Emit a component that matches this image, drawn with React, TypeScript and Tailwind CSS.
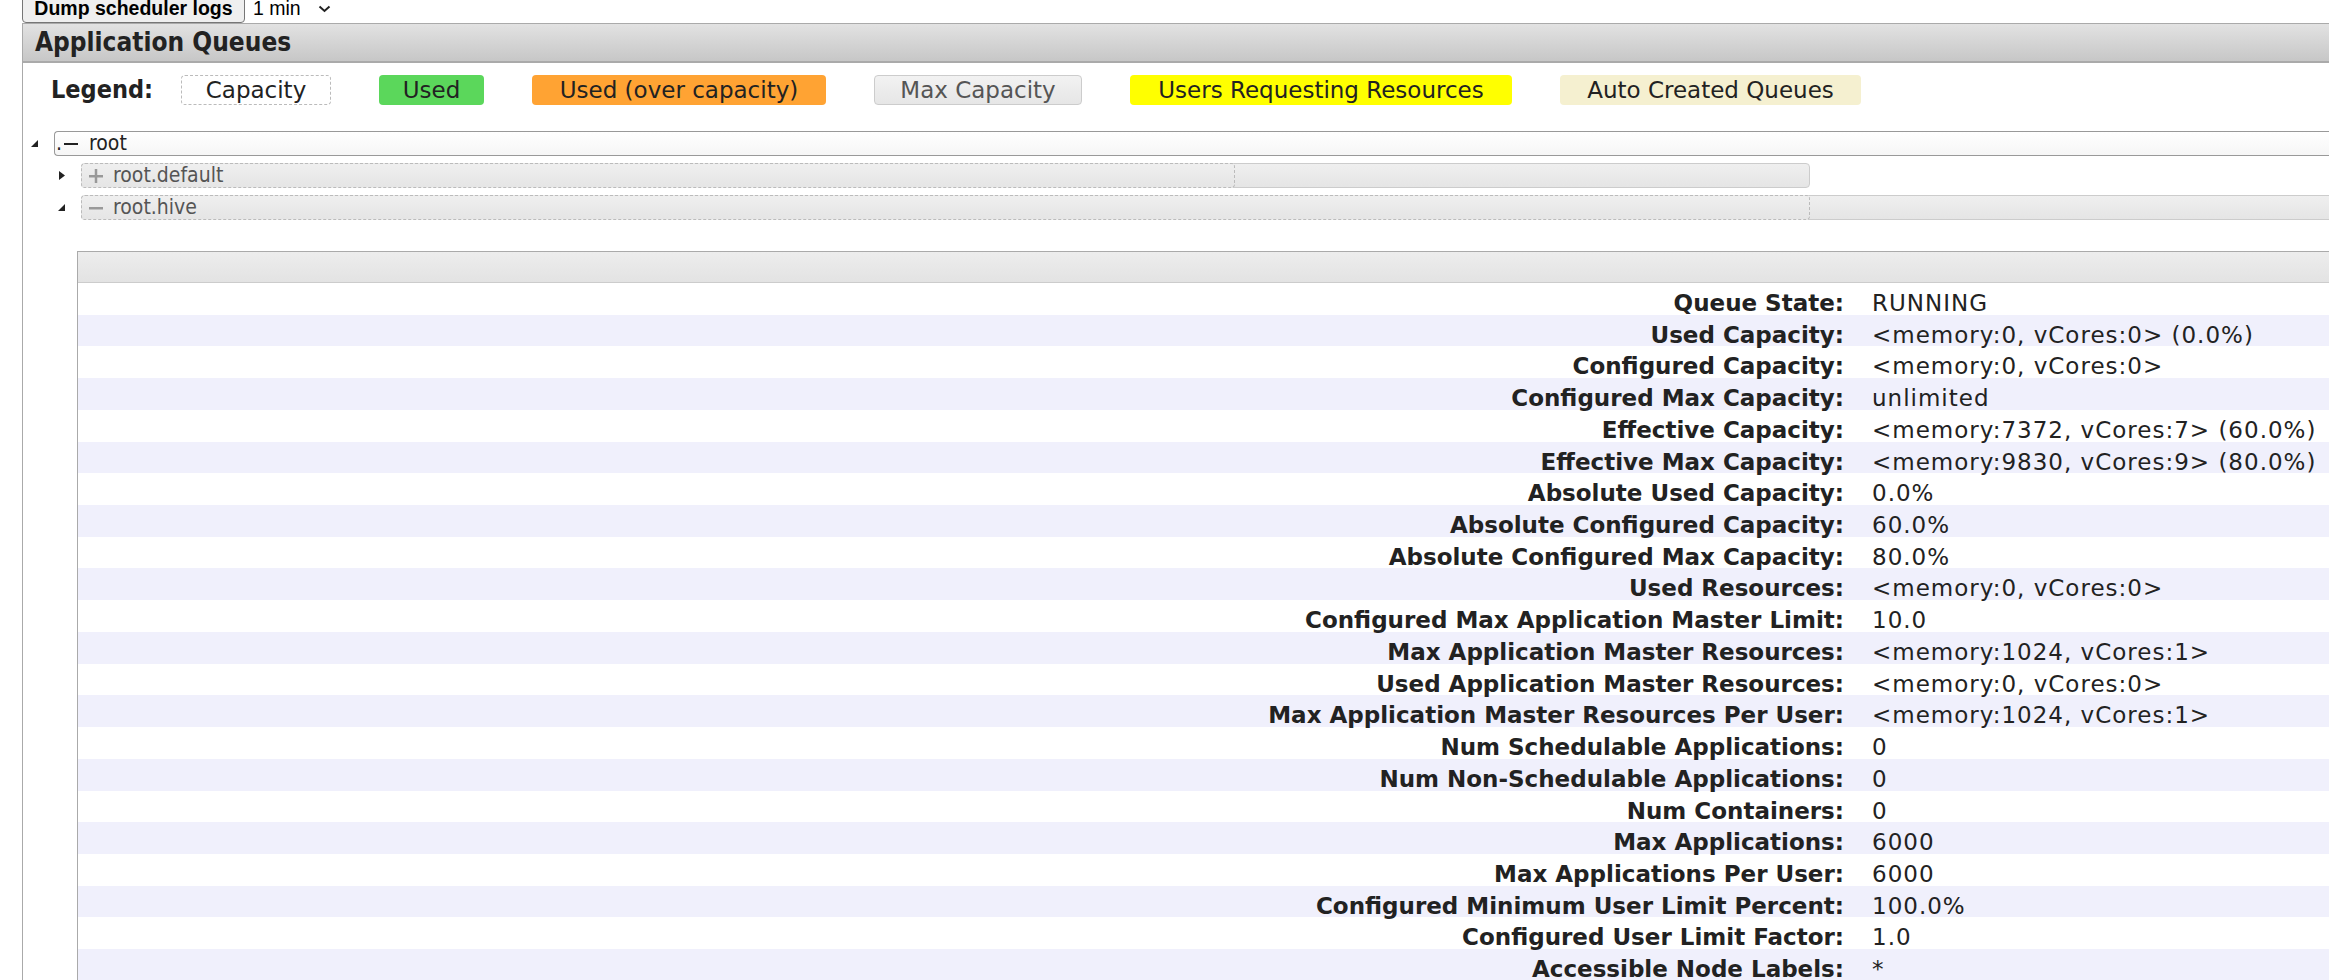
import React from "react";

const rows: [string, string][] = [
  ["Queue State:", "RUNNING"],
  ["Used Capacity:", "<memory:0, vCores:0> (0.0%)"],
  ["Configured Capacity:", "<memory:0, vCores:0>"],
  ["Configured Max Capacity:", "unlimited"],
  ["Effective Capacity:", "<memory:7372, vCores:7> (60.0%)"],
  ["Effective Max Capacity:", "<memory:9830, vCores:9> (80.0%)"],
  ["Absolute Used Capacity:", "0.0%"],
  ["Absolute Configured Capacity:", "60.0%"],
  ["Absolute Configured Max Capacity:", "80.0%"],
  ["Used Resources:", "<memory:0, vCores:0>"],
  ["Configured Max Application Master Limit:", "10.0"],
  ["Max Application Master Resources:", "<memory:1024, vCores:1>"],
  ["Used Application Master Resources:", "<memory:0, vCores:0>"],
  ["Max Application Master Resources Per User:", "<memory:1024, vCores:1>"],
  ["Num Schedulable Applications:", "0"],
  ["Num Non-Schedulable Applications:", "0"],
  ["Num Containers:", "0"],
  ["Max Applications:", "6000"],
  ["Max Applications Per User:", "6000"],
  ["Configured Minimum User Limit Percent:", "100.0%"],
  ["Configured User Limit Factor:", "1.0"],
  ["Accessible Node Labels:", "*"],
];

function OpenArrow() {
  return (
    <svg width="7" height="7" viewBox="0 0 7 7">
      <polygon points="7,0 7,7 0,7" fill="#222" />
    </svg>
  );
}

function ClosedArrow() {
  return (
    <svg width="6" height="9" viewBox="0 0 6 9">
      <polygon points="0,0 6,4.5 0,9" fill="#222" />
    </svg>
  );
}

// plus / minus toggle drawn as bars, like the jstree theme
function Toggle(props: { open: boolean }) {
  return (
    <svg width="14" height="14" viewBox="0 0 14 14">
      <rect x="0" y="6" width="14" height="2.5" fill="#999" />
      {!props.open && <rect x="5.75" y="0" width="2.5" height="14" fill="#999" />}
    </svg>
  );
}

function Legend() {
  return (
    <div className="flex items-center h-[30px] pl-[28px] text-[23px] font-['DejaVu_Sans',sans-serif] text-[#222]">
      <span className="w-[130px] text-[25px] font-bold font-['DejaVu_Sans_Condensed','DejaVu_Sans',sans-serif]">
        Legend:
      </span>
      <div className="flex gap-[48px]">
        <div className="w-[150px] h-[30px] flex items-center justify-center border border-dashed border-[#bbb] rounded-[4px] bg-white">
          Capacity
        </div>
        <div className="w-[105px] h-[30px] flex items-center justify-center rounded-[4px] bg-[#5bd75b]">
          Used
        </div>
        <div className="w-[294px] h-[30px] flex items-center justify-center rounded-[4px] bg-[#ffa333]">
          Used (over capacity)
        </div>
        <div className="w-[208px] h-[30px] flex items-center justify-center rounded-[4px] border border-[#ccc] bg-linear-to-b from-[#f2f2f2] to-[#e6e6e6] text-[#555]">
          Max Capacity
        </div>
        <div className="w-[382px] h-[30px] flex items-center justify-center rounded-[4px] bg-[#ffff00]">
          Users Requesting Resources
        </div>
        <div className="w-[301px] h-[30px] flex items-center justify-center rounded-[4px] bg-[#f5f0d0]">
          Auto Created Queues
        </div>
      </div>
    </div>
  );
}

function ChildQueue(props: { name: string; open: boolean; cap: number; max: number }) {
  return (
    <div className="flex items-center h-[25px]">
      <div className="w-[58px] flex justify-end pr-[16px]">
        {props.open ? <OpenArrow /> : <ClosedArrow />}
      </div>
      <div
        className="relative h-[25px] rounded-[4px] border border-[#ccc] bg-linear-to-b from-[#efefef] to-[#e5e5e5]"
        style={{ width: props.max }}
      >
        <div
          className="absolute left-[-1px] top-[-1px] h-[25px] rounded-[4px] border border-dashed border-[#bbb] bg-linear-to-b from-[#efefef] to-[#e5e5e5] flex items-center pl-[7px] font-['DejaVu_Sans_Condensed','DejaVu_Sans',sans-serif] text-[21px]"
          style={{ width: props.cap }}
        >
          <Toggle open={props.open} />
          <span className="ml-[10px] text-[#555]">{props.name}</span>
        </div>
      </div>
    </div>
  );
}

export default function App() {
  return (
    <div className="w-screen h-[980px] overflow-hidden bg-white">
      <div className="h-[23px] overflow-hidden flex items-end pl-[22px] font-['Liberation_Sans',Arial,sans-serif] text-[19.5px] leading-[19px] text-black">
        <button className="h-[34px] w-[223px] border border-[#767676] rounded-[4px] bg-[#efefef] font-bold flex items-end justify-center pb-[4px]">
          Dump scheduler logs
        </button>
        <div className="flex items-end h-[23px] ml-[8px] pb-[5px]">
          <span>1 min</span>
          <svg className="ml-[17px] mb-[5px]" width="13" height="8" viewBox="0 0 13 8">
            <path d="M1.5 1.5 L6.5 6 L11.5 1.5" stroke="#222" strokeWidth="2" fill="none" />
          </svg>
        </div>
      </div>

      <div className="ml-[22px] w-[2700px] border-l border-[#aaa] h-[960px]">
        <div className="h-[40px] border-t border-b-2 border-[#aaa] bg-linear-to-b from-[#e2e2e2] to-[#c7c7c7] flex items-center pl-[12px]">
          <h1 className="text-[26px] font-bold text-[#222] font-['DejaVu_Sans_Condensed','DejaVu_Sans',sans-serif]">
            Application Queues
          </h1>
        </div>

        <div className="pt-[12px]">
          <Legend />
        </div>

        <div className="mt-[26px] flex flex-col gap-[7px]">
          <div className="flex items-center h-[25px]">
            <div className="w-[31px] flex justify-end pr-[16px]">
              <OpenArrow />
            </div>
            <div className="flex-1 h-[25px] border border-r-0 border-[#999] rounded-l-[4px] bg-linear-to-b from-white to-[#f6f6f6] flex items-center font-['DejaVu_Sans_Condensed','DejaVu_Sans',sans-serif] text-[21px] text-[#222]">
              <span className="ml-[1px]">.</span>
              <span className="ml-[2px] w-[14px] h-[2px] bg-[#222]"></span>
              <span className="ml-[11px]">root</span>
            </div>
          </div>
          <ChildQueue name="root.default" open={false} cap={1154} max={1729} />
          <ChildQueue name="root.hive" open={true} cap={1729} max={2306} />
        </div>

        <div className="mt-[31px] ml-[54px] border-l border-t border-[#aaa] font-['DejaVu_Sans',sans-serif] text-[23px] text-[#222]">
          <div className="h-[31px] border-b border-[#ccc] bg-linear-to-b from-[#ededed] to-[#e3e3e3]"></div>
          {rows.map(([label, value], i) => (
            <div
              key={label}
              className={
                "grid grid-cols-[1780px_1fr] h-[31.72px] items-center pt-[3px] " +
                (i % 2 === 1 ? "bg-[#f0f0fc]" : "bg-white")
              }
            >
              <div className="text-right pr-[14px] font-bold whitespace-nowrap">{label}</div>
              <div className="pl-[14px] whitespace-nowrap tracking-[1px]">{value}</div>
            </div>
          ))}
        </div>
      </div>
    </div>
  );
}
